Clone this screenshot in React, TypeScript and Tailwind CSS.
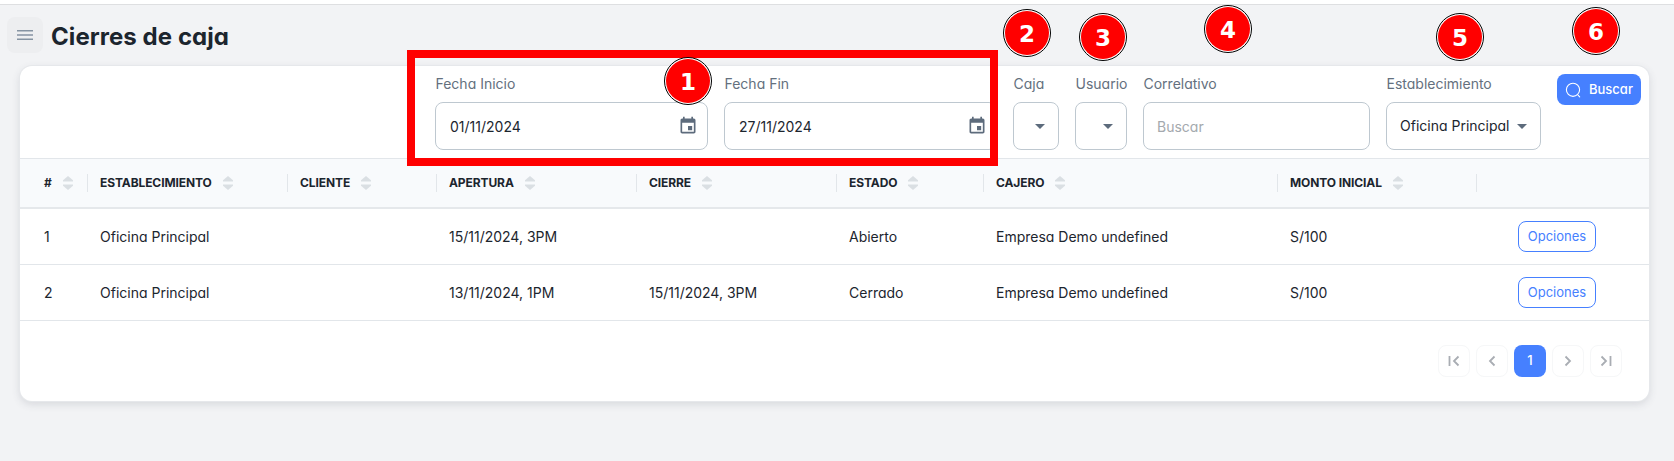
import type { ReactNode } from "react";

const columns = [
  { label: "#", width: "w-[68px] pl-6" },
  { label: "ESTABLECIMIENTO", width: "w-[200px] pl-3" },
  { label: "CLIENTE", width: "w-[149px] pl-3" },
  { label: "APERTURA", width: "w-[200px] pl-3" },
  { label: "CIERRE", width: "w-[200px] pl-3" },
  { label: "ESTADO", width: "w-[147px] pl-3" },
  { label: "CAJERO", width: "w-[294px] pl-3" },
  { label: "MONTO INICIAL", width: "w-[199px] pl-3" },
];

const rows = [
  ["1", "Oficina Principal", "", "15/11/2024, 3PM", "", "Abierto", "Empresa Demo undefined", "S/100"],
  ["2", "Oficina Principal", "", "13/11/2024, 1PM", "15/11/2024, 3PM", "Cerrado", "Empresa Demo undefined", "S/100"],
];

function SortIcon() {
  return (
    <svg width="10" height="14" viewBox="0 0 10 14" fill="#dadfe3">
      <path d="M5 0 10 4.2V5.6H0V4.2Z" />
      <path d="M5 14 10 9.8V8.4H0V9.8Z" />
    </svg>
  );
}

function CalendarIcon() {
  return (
    <svg width="20" height="20" viewBox="0 0 24 24" fill="#5d6b7c" className="-mr-1">
      <path d="M17 12h-5v5h5v-5zM16 1v2H8V1H6v2H5c-1.11 0-1.99.9-1.99 2L3 19c0 1.1.89 2 2 2h14c1.1 0 2-.9 2-2V5c0-1.1-.9-2-2-2h-1V1h-2zm3 18H5V8h14v11z" />
    </svg>
  );
}

function Caret() {
  return (
    <svg width="10" height="5" viewBox="0 0 10 5" fill="#5d6b7c" className="shrink-0">
      <path d="M0 0h10L5 5z" />
    </svg>
  );
}

function Field({ label, className, children }: { label: string; className: string; children?: ReactNode }) {
  return (
    <div className={className}>
      <div className="h-5 pl-[0.5px] text-sm leading-5 whitespace-nowrap text-[#64707e]">{label}</div>
      <div className="mt-2 flex h-12 items-center rounded-lg border border-[#bec8d0] bg-white pr-[13px] pl-[13px] text-sm text-[#1c252e]">
        {children}
      </div>
    </div>
  );
}

function Badge({ n, className }: { n: number; className: string }) {
  return (
    <div
      className={`absolute flex size-12 items-center justify-center rounded-full border border-black bg-white p-px ${className}`}
    >
      <div className="flex size-full items-center justify-center rounded-full bg-[#ff0000] pt-[3px] font-['DejaVu_Sans',sans-serif] text-[23px] leading-none font-bold text-white">
        {n}
      </div>
    </div>
  );
}

function PageButton({ children, active }: { children: ReactNode; active?: boolean }) {
  return (
    <button
      className={
        active
          ? "flex size-8 items-center justify-center rounded-lg bg-[#4680ff] text-[13px] font-medium text-white"
          : "flex size-8 items-center justify-center rounded-lg border border-[#f6f7f8] bg-white"
      }
    >
      {children}
    </button>
  );
}

function PageIcon({ d }: { d: string }) {
  return (
    <svg width="12" height="12" viewBox="0 0 12 12" fill="none" stroke="#a9adb3" strokeWidth="1.8">
      <path d={d} />
    </svg>
  );
}

export default function App() {
  return (
    <div className="relative h-[461px] w-[1674px] overflow-hidden bg-[#f2f3f5] font-['Inter','Liberation_Sans',sans-serif] text-[#1c252e] [font-feature-settings:'cv11']">
      <div className="h-[5px] border-b border-[#dedfe1] bg-white" />
      <header className="flex h-[61px] items-start gap-2 pt-3 pl-[7px]">
        <button className="flex size-9 items-center justify-center rounded-lg bg-[#edeef0]">
          <svg width="16" height="10" viewBox="0 0 16 10" stroke="#8593a2" strokeWidth="1.6">
            <path d="M0 .8h16M0 5h16M0 9.2h16" />
          </svg>
        </button>
        <h1 className="pt-0.5 text-2xl leading-9 font-bold tracking-[0.06px]">Cierres de caja</h1>
      </header>

      <main className="ml-5 h-[335px] w-[1629px] overflow-hidden rounded-xl bg-white shadow-[0_0_0_1px_#e6e8eb,0_3px_8px_rgba(60,70,90,0.16)]">
        <div className="flex h-[93px] items-start justify-end gap-4 border-b border-[#e2e6ea] pt-2 pr-2">
          <Field label="Fecha Inicio" className="w-[273px]">
            <span className="grow pt-0.5 pl-px">01/11/2024</span>
            <CalendarIcon />
          </Field>
          <Field label="Fecha Fin" className="w-[273px]">
            <span className="grow pt-0.5 pl-px">27/11/2024</span>
            <CalendarIcon />
          </Field>
          <Field label="Caja" className="w-[46px]">
            <span className="grow" />
            <Caret />
          </Field>
          <Field label="Usuario" className="w-[52px]">
            <span className="grow" />
            <Caret />
          </Field>
          <Field label="Correlativo" className="w-[227px]">
            <span className="pt-0.5 text-[#a4a9ae]">Buscar</span>
          </Field>
          <Field label="Establecimiento" className="w-[155px]">
            <span className="grow whitespace-nowrap">Oficina Principal</span>
            <Caret />
          </Field>
          <button className="flex h-[31px] w-[84px] items-center gap-2 rounded-lg bg-[#4680ff] pl-2 text-[13px] font-medium text-white">
            <svg width="16" height="16" viewBox="0 0 16 16" fill="none" stroke="white" strokeWidth="1.1" strokeLinecap="round">
              <circle cx="8" cy="7.8" r="6.6" />
              <path d="m13.2 13.4 1.5 1.4" />
            </svg>
            Buscar
          </button>
        </div>

        <div className="flex h-[50px] items-center border-b-2 border-[#e5e8eb] bg-[#f8fafc]">
          {columns.map((c) => (
            <div
              key={c.label}
              className={`flex h-[18px] shrink-0 items-center gap-[11px] border-r border-[#e2e6ea] text-xs font-bold tracking-[-0.1px] whitespace-nowrap ${c.width}`}
            >
              {c.label}
              <SortIcon />
            </div>
          ))}
        </div>

        {rows.map((row) => (
          <div key={row[0]} className="flex h-14 items-center border-b border-[#e2e6ea] text-sm">
            {row.map((cell, i) => (
              <div key={i} className={`shrink-0 whitespace-nowrap ${columns[i].width}`}>
                {cell}
              </div>
            ))}
            <div className="flex grow pl-[41px]">
              <button className="h-[31px] w-[78px] rounded-lg border border-[#4680ff] text-[13px] text-[#4680ff]">Opciones</button>
            </div>
          </div>
        ))}

        <div className="flex justify-end gap-1.5 pt-6 pr-[27px]">
          <PageButton>
            <PageIcon d="M1.5 1v10M10.5 1.5 6 6l4.5 4.5" />
          </PageButton>
          <PageButton>
            <PageIcon d="M8.5 1.5 4 6l4.5 4.5" />
          </PageButton>
          <PageButton active>1</PageButton>
          <PageButton>
            <PageIcon d="M3.5 1.5 8 6l-4.5 4.5" />
          </PageButton>
          <PageButton>
            <PageIcon d="M10.5 1v10M1.5 1.5 6 6l-4.5 4.5" />
          </PageButton>
        </div>
      </main>

      <div className="absolute top-[50px] left-[407px] h-[116px] w-[591px] border-8 border-[#ff0000]" />
      <Badge n={1} className="top-[57px] left-[664px]" />
      <Badge n={2} className="top-[9px] left-[1003px]" />
      <Badge n={3} className="top-[13px] left-[1079px]" />
      <Badge n={4} className="top-[5px] left-[1204px]" />
      <Badge n={5} className="top-[13px] left-[1436px]" />
      <Badge n={6} className="top-[7px] left-[1572px]" />
    </div>
  );
}
